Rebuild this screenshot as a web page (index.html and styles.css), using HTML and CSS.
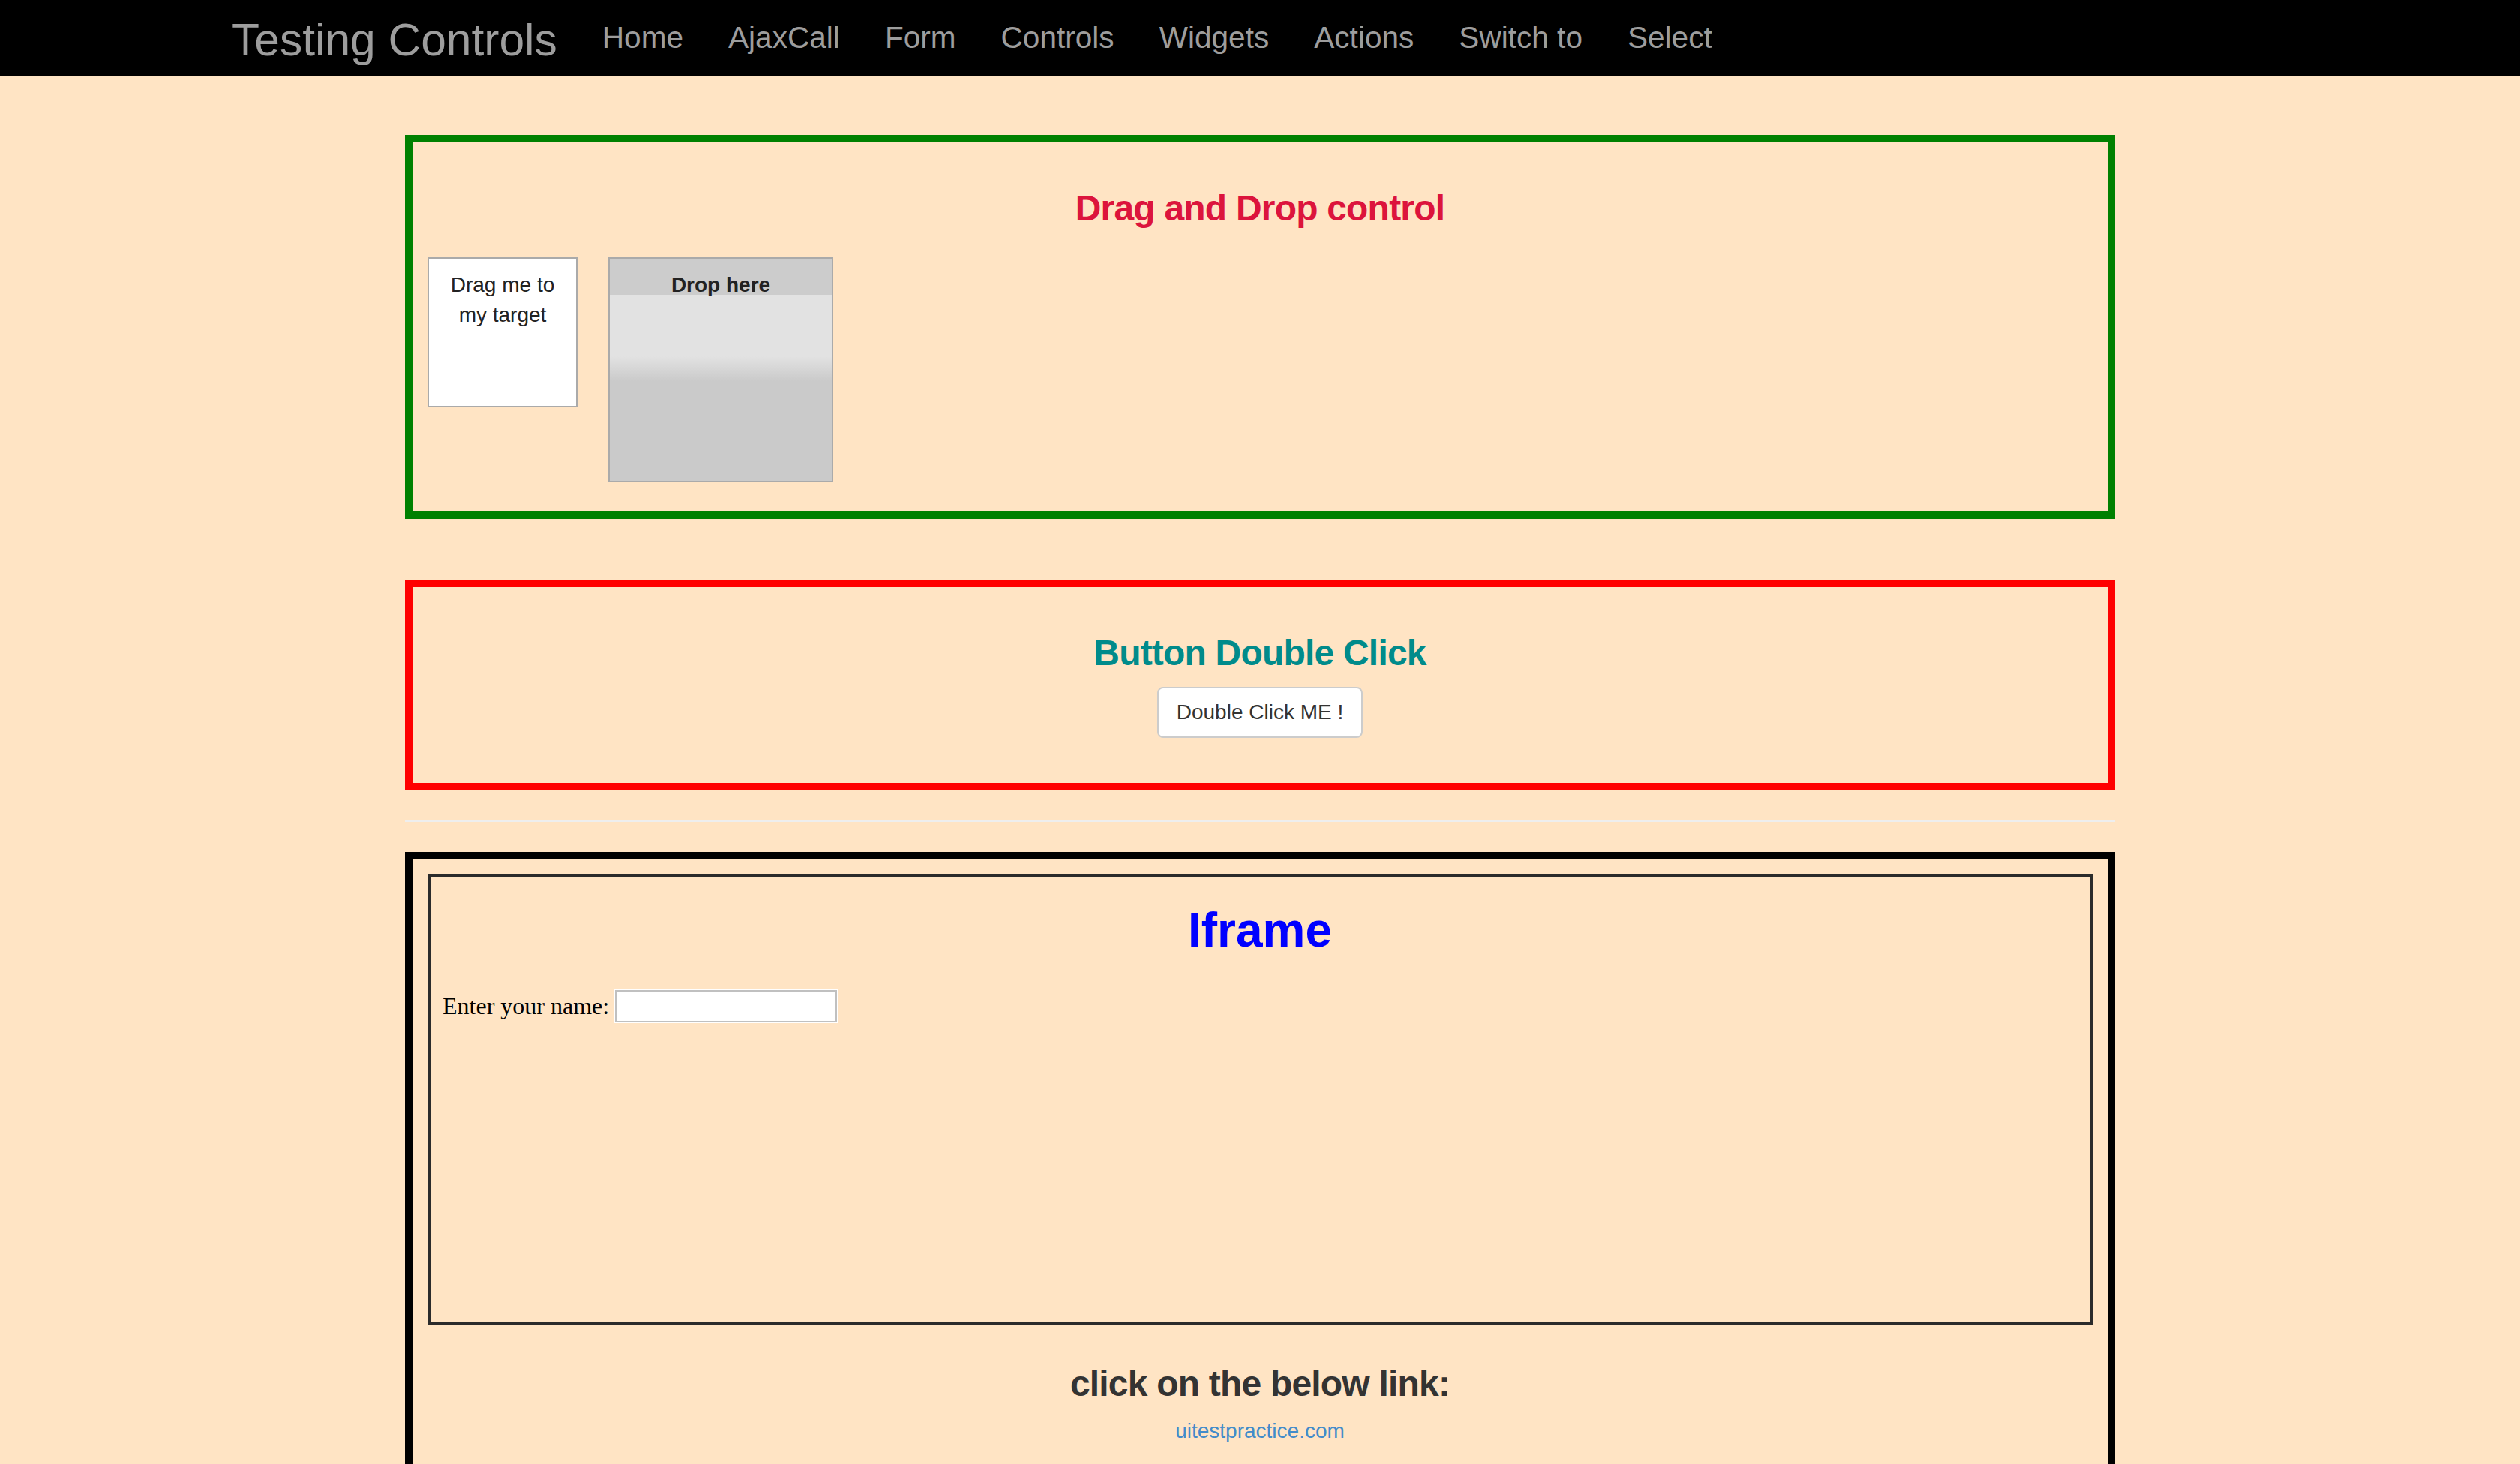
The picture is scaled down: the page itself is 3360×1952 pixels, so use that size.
FILE: index.html
```html
<!DOCTYPE html>
<html lang="en">
<head>
<meta charset="utf-8">
<title>Testing Controls</title>
<link rel="stylesheet" href="styles.css">
</head>
<body>
<nav class="navbar">
  <a class="brand" href="#">Testing Controls</a>
  <ul class="nav-links">
    <li><a href="#">Home</a></li>
    <li><a href="#">AjaxCall</a></li>
    <li><a href="#">Form</a></li>
    <li><a href="#">Controls</a></li>
    <li><a href="#">Widgets</a></li>
    <li><a href="#">Actions</a></li>
    <li><a href="#">Switch to</a></li>
    <li><a href="#">Select</a></li>
  </ul>
</nav>
<main class="container">
  <section class="panel panel-green">
    <h3 class="panel-title title-crimson">Drag and Drop control</h3>
    <div class="dnd-row">
      <div class="draggable">Drag me to my target</div>
      <div class="droppable"><p class="drop-header">Drop here</p></div>
    </div>
  </section>
  <section class="panel panel-red">
    <h3 class="panel-title title-teal">Button Double Click</h3>
    <div class="btn-row"><button class="btn" type="button">Double Click ME !</button></div>
  </section>
  <hr class="divider">
  <section class="panel panel-black">
    <div class="frame">
      <h1 class="frame-title">Iframe</h1>
      <div class="frame-form">
        <label class="frame-label">Enter your name:</label>
        <input class="frame-input" type="text">
      </div>
    </div>
    <h3 class="panel-title link-title">click on the below link:</h3>
    <div class="link-row"><a class="site-link" href="#">uitestpractice.com</a></div>
  </section>
</main>
</body>
</html>
```
FILE: styles.css
```css
html, body {
  margin: 0;
  padding: 0;
}
body {
  background: #ffe4c4;
  font-family: "Liberation Sans", Arial, Helvetica, sans-serif;
  color: #333;
}

/* Navbar */
.navbar {
  display: flex;
  align-items: center;
  height: 101px;
  background: #000;
  padding-left: 309px;
}
.brand {
  font-size: 60.5px;
  color: #9d9d9d;
  text-decoration: none;
  padding-right: 30px;
  margin-top: 4px;
  white-space: nowrap;
}
.nav-links {
  display: flex;
  list-style: none;
  margin: 0;
  padding: 0;
}
.nav-links a {
  display: block;
  padding: 0 30px;
  font-size: 40.6px;
  color: #9d9d9d;
  text-decoration: none;
  white-space: nowrap;
}

/* Container */
.container {
  width: 2280px;
  margin: 0 auto;
  padding-top: 79px;
}

.panel {
  border: 10px solid #000;
}
.panel-green {
  border-color: #008000;
  padding: 0 20px 39px;
}
.panel-red {
  border-color: #ff0000;
  margin-top: 81px;
  padding: 0 20px 60px;
}
.panel-black {
  border-color: #000;
  padding: 20px 20px 200px;
}

.panel-title {
  font-size: 48px;
  font-weight: bold;
  letter-spacing: -0.8px;
  line-height: 53px;
  text-align: center;
  margin: 61px 0 39px;
}
.title-crimson { color: #dc143c; }
.title-teal { color: #008b8b; margin: 61px 0 19px; }
.link-title { color: #333; margin: 52px 0 17px; }

/* Drag and drop */
.dnd-row {
  display: flex;
  align-items: flex-start;
  gap: 41px;
}
.draggable {
  box-sizing: border-box;
  width: 200px;
  height: 200px;
  padding: 15px 14px 14px;
  border: 2px solid #aaa;
  background: #fff;
  color: #222;
  font-size: 28px;
  line-height: 40px;
  text-align: center;
}
.droppable {
  box-sizing: border-box;
  width: 300px;
  height: 300px;
  border: 2px solid #aaa;
  background: linear-gradient(to bottom, #e2e2e2 0px, #e2e2e2 130px, #cacaca 163px, #cacaca 100%);
}
.drop-header {
  box-sizing: border-box;
  margin: 0;
  height: 48px;
  padding-top: 22px;
  line-height: 26px;
  background: #ccc;
  color: #222;
  font-size: 28px;
  font-weight: bold;
  text-align: center;
}

/* Button */
.btn-row {
  display: flex;
  justify-content: center;
}
.btn {
  box-sizing: border-box;
  height: 68px;
  padding: 12px 24px;
  border: 2px solid #ccc;
  border-radius: 8px;
  background: #fff;
  color: #333;
  font-family: "Liberation Sans", Arial, Helvetica, sans-serif;
  font-size: 28px;
  line-height: 40px;
}

.divider {
  border: 0;
  border-top: 2px solid #eee;
  margin: 40px 0;
  height: 0;
}

/* Iframe mock */
.frame {
  box-sizing: border-box;
  height: 600px;
  border: 4px solid #2b2b2b;
  padding: 0 16px;
}
.frame-title {
  margin: 33px 0 43px;
  font-size: 64px;
  line-height: 74px;
  font-weight: bold;
  color: #0000ff;
  text-align: center;
}
.frame-form {
  display: flex;
  align-items: center;
  gap: 8px;
}
.frame-label {
  font-family: "Liberation Serif", "Times New Roman", serif;
  font-size: 32px;
  line-height: 37px;
  color: #000;
}
.frame-input {
  box-sizing: border-box;
  width: 296px;
  height: 43px;
  border: 2px solid #c0c0c0;
  box-shadow: 0 0 0 1px #fff;
  background: #fff;
  margin: 0;
  padding: 0 4px;
  font-size: 26px;
}

.link-row {
  text-align: center;
  line-height: 40px;
}
.site-link {
  font-size: 28px;
  color: #428bca;
  text-decoration: none;
}
```
